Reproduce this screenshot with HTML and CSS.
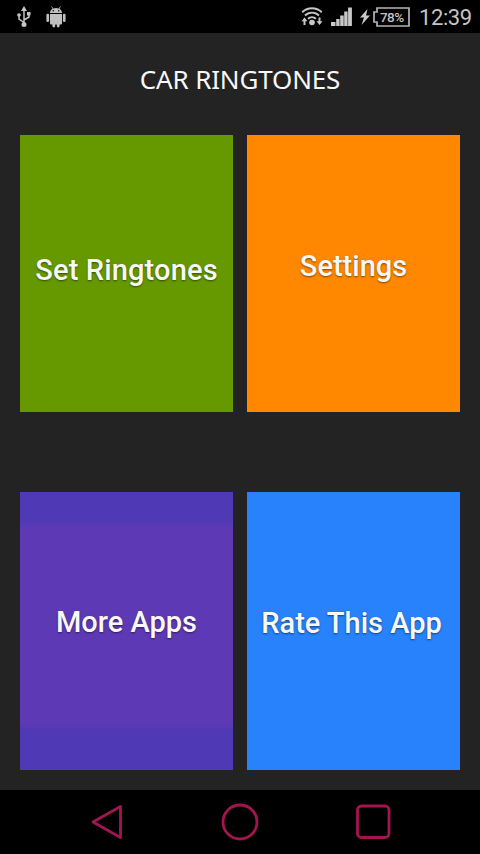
FILE: index.html
```html
<!DOCTYPE html>
<html lang="en">
<head>
<meta charset="utf-8">
<title>Car Ringtones</title>
<link rel="stylesheet" href="styles.css">
</head>
<body>
<header class="status">
  <svg class="usb" width="14" height="22" viewBox="0 0 14 22" fill="none" stroke="#c4c4c4" stroke-width="1.5">
    <path d="M7 4v14M7 16.500L2 13V9.500M7 14l5-3V8"/>
    <path d="M7 0l3 5H4z" fill="#c4c4c4" stroke="none"/>
    <circle cx="7" cy="18.500" r="2.500" fill="#c4c4c4" stroke="none"/>
    <circle cx="2" cy="9" r="1.800" fill="#c4c4c4" stroke="none"/>
    <path d="M10 6h3.500v3.500H10z" fill="#c4c4c4" stroke="none"/>
  </svg>
  <svg class="robot" width="20" height="22" viewBox="0 0 20 22" fill="#c0c0c0">
    <path d="M4 7c0-2 1-3.500 2.600-4.300L5.200.600l.6-.4 1.500 2.200a8 8 0 0 1 5.400 0L14.200.2l.6.400-1.400 2.100C15 3.500 16 5 16 7z"/>
    <path d="M4 8h12v9.500a1 1 0 0 1-1 1h-1.400V20a1.400 1.400 0 0 1-2.800 0v-1.500H9.200V20a1.400 1.400 0 0 1-2.800 0v-1.500H5a1 1 0 0 1-1-1z"/>
    <rect x="0.400" y="7.700" width="2.700" height="8.300" rx="1.300"/>
    <rect x="16.900" y="7.700" width="2.700" height="8.300" rx="1.300"/>
    <circle cx="7.300" cy="4.800" r=".7" fill="#000"/><circle cx="12.700" cy="4.800" r=".7" fill="#000"/>
  </svg>
  <svg class="wifi" width="22" height="20" viewBox="0 0 22 20" fill="none" stroke="#c8c8c8" stroke-width="1.900">
    <path d="M1.200 6.200a14 14 0 0 1 19.600 0M4 9.500a10 10 0 0 1 14 0M7 12.800a6 6 0 0 1 8 0"/>
    <circle cx="11" cy="16.500" r="2.800" fill="#c8c8c8" stroke="none"/>
    <path d="M3.500 11.500l3 3.700H4.500V19H2.500v-3.800H.5zM18.500 19l-3-3.700h2v-3.800h2v3.800h2z" fill="#c8c8c8" stroke="none"/>
  </svg>
  <svg class="signal" width="21" height="20" viewBox="0 0 21 20" fill="#c8c8c8">
    <path d="M0 15h4.500v4H0zM5.200 12h3.400v7H5.200zM9.200 8.500h3.500V19H9.200zM13.200 4.500h3.400V19h-3.400zM17.100 .500h3.800V19h-3.800z"/>
  </svg>
  <svg class="bolt" width="10" height="16" viewBox="0 0 10 16" fill="#c8c8c8">
    <path d="M7.500 0L0 8.500h4L1.500 16 10 6.500H6z"/>
  </svg>
  <div class="battery">
    <svg class="shell" width="38" height="20" viewBox="0 0 38 20" fill="none" stroke="#b4b4b4" stroke-width="1.700">
      <path d="M4 1h32v18H4v-4H1V5h3z"/>
    </svg>
    <span class="percent">78%</span>
  </div>
  <time class="clock">12:39</time>
</header>
<main class="screen">
  <h1 class="title">CAR RINGTONES</h1>
  <div class="grid">
    <div class="tile ringtones"><span>Set Ringtones</span></div>
    <div class="tile settings"><span>Settings</span></div>
    <div class="tile more"><span>More Apps</span></div>
    <div class="tile rate"><span>Rate This App</span></div>
  </div>
</main>
<nav class="navbar">
  <svg width="480" height="64" viewBox="0 0 480 64" fill="none" stroke="#a31550" stroke-width="2.800" stroke-linejoin="round">
    <path d="M93 32L120.500 16.500V47.500z"/>
    <circle cx="240" cy="32" r="17"/>
    <rect x="357.500" y="16" width="31.500" height="31.500" rx="4"/>
  </svg>
</nav>
</body>
</html>
```
FILE: styles.css
```css
* { box-sizing: border-box; }

body {
  margin: 0;
  width: 480px;
  height: 854px;
  display: flex;
  flex-direction: column;
  background: #232323;
  overflow: hidden;
  font-family: Roboto, "Liberation Sans", sans-serif;
}

.status {
  height: 33px;
  display: flex;
  align-items: flex-start;
  padding: 6px 0 0 17px;
  background: #000;
  color: #c4c4c4;
}

.status svg { flex: none; display: block; }
.robot { margin-left: 15px; }
.wifi { margin-left: 235px; }
.signal { margin: 1px 0 0 8px; }
.bolt { margin: 3px 0 0 8px; }

.battery {
  display: grid;
  width: 38px;
  height: 20px;
  margin: 1px 0 0 3px;
}

.shell, .percent { grid-area: 1 / 1; }

.percent {
  padding-left: 7px;
  font-size: 13.5px;
  font-weight: 500;
  line-height: 20px;
  letter-spacing: -0.6px;
}

.clock {
  margin-left: 8px;
  font-size: 22px;
  line-height: 23px;
  font-weight: 400;
  letter-spacing: -0.4px;
}

.screen {
  height: 757px;
  padding: 0 20px;
}

.title {
  margin: 0;
  height: 102px;
  padding-top: 28px;
  color: #f8f8f8;
  font-family: "Noto Sans", sans-serif;
  font-size: 26px;
  font-weight: 400;
  line-height: 36px;
  letter-spacing: -0.15px;
  text-align: center;
  white-space: nowrap;
}

.grid {
  display: grid;
  grid-template-columns: 213px 213px;
  grid-template-rows: 277px 278px;
  gap: 80px 14px;
}

.tile {
  display: flex;
  align-items: center;
  justify-content: center;
  color: #f8f8f8;
  font-size: 29px;
  font-weight: 500;
  line-height: 34px;
  white-space: nowrap;
  text-shadow: 0 1px 2px rgba(0, 0, 0, 0.5);
}

.ringtones {
  background: #669900;
  padding-bottom: 7px;
  letter-spacing: 0.15px;
}

.settings { background: #ff8800; padding-bottom: 15px; }

.more {
  background: linear-gradient(#4f39b5 0 28px, #5d39b5 36px 231px, #4f39b5 239px);
  padding-bottom: 18px;
}

.rate {
  background: #2782fc;
  padding: 0 4px 16px 0;
}

.navbar { height: 64px; background: #000; }
.navbar svg { display: block; }
```
